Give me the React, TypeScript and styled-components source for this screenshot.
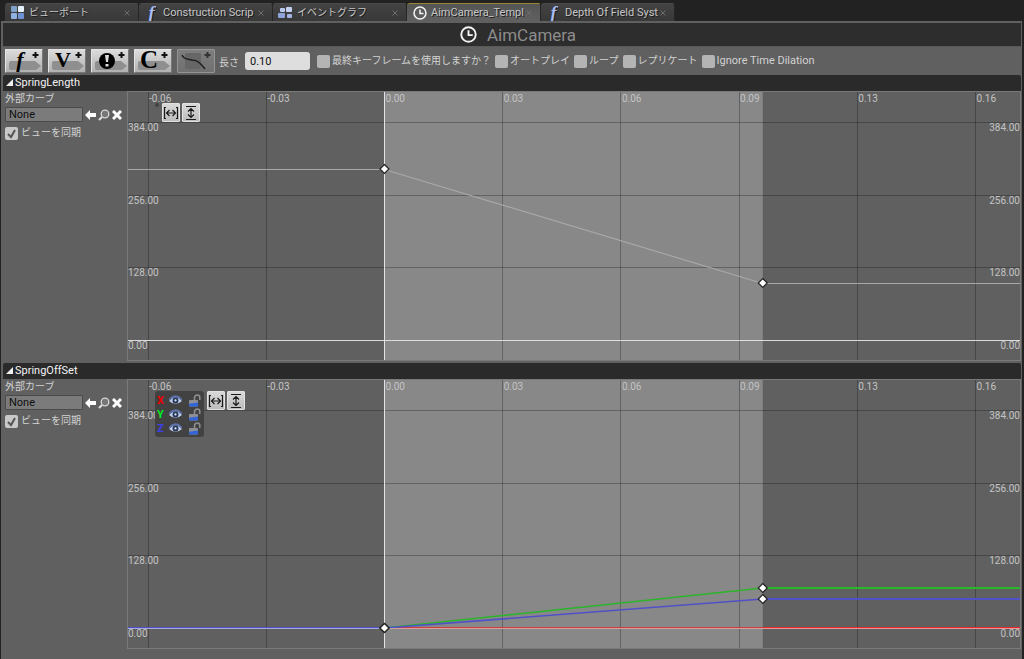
import React from "react";
import styled, { createGlobalStyle } from "styled-components";

const GlobalStyle = createGlobalStyle`
  * { box-sizing: border-box; }
  body {
    margin: 0;
    background: #222;
    color: #d2d2d2;
    font-family: Roboto, "Noto Sans CJK JP", sans-serif;
    font-size: 11px;
  }
  button, input { font: inherit; color: inherit; margin: 0; }
`;

/* ---------- data ---------- */

type Key = { t: number; v: number };
type Curve = { color: string; width: number; keys: Key[] };
type Channel = { name: string; color: string };

const VIEW_START = -0.0678;
const VIEW_SPAN = 0.2358;
const ZERO_Y = 248;
const STEP_Y = 72.7;
const TIMES = [-2, -1, 0, 1, 2, 3, 4, 5].map((n) => n / 32);
const TIME_LABELS = ["-0.06", "-0.03", "0.00", "0.03", "0.06", "0.09", "0.13", "0.16"];
const VALUES = [384, 256, 128, 0];
const LENGTH = 0.1;

const px = (t: number) => `${(((t - VIEW_START) / VIEW_SPAN) * 100).toFixed(2)}%`;
const py = (v: number) => Math.round(ZERO_Y - (v / 128) * STEP_Y);

const SPRING_LENGTH: Curve[] = [
  { color: "#a8a8a8", width: 1, keys: [{ t: 0, v: 301 }, { t: LENGTH, v: 100 }] },
];
const SPRING_OFFSET: Curve[] = [
  { color: "#e62828", width: 2, keys: [{ t: 0, v: 0 }, { t: LENGTH, v: 0 }] },
  { color: "#2bb52b", width: 2, keys: [{ t: 0, v: 0 }, { t: LENGTH, v: 70 }] },
  { color: "#5050c8", width: 2, keys: [{ t: 0, v: 0 }, { t: LENGTH, v: 51 }] },
];
const CHANNELS: Channel[] = [
  { name: "X", color: "#f00000" },
  { name: "Y", color: "#00f020" },
  { name: "Z", color: "#4040e8" },
];

/* ---------- layout ---------- */

const TabBar = styled.nav`
  display: flex;
  height: 21px;
  padding: 3px 5px 0;
`;

const Tab = styled.div<{ $active?: boolean }>`
  display: flex;
  flex: 0 1 134px;
  min-width: 0;
  align-items: center;
  padding: 0 6px 0 5px;
  overflow: hidden;
  border-right: 1px solid #262626;
  border-top: 1px solid ${(p) => (p.$active ? "#9a8530" : "#4a4a4a")};
  border-radius: 3px 3px 0 0;
  background: ${(p) => (p.$active ? "linear-gradient(#555, #606060)" : "linear-gradient(#434343, #383838)")};
`;

const TabLabel = styled.button<{ $cjk?: boolean }>`
  display: flex;
  flex: 1 0 auto;
  align-items: center;
  gap: 4px;
  padding: 0;
  border: 0;
  background: none;
  color: #c6c6c6;
  font-size: ${(p) => (p.$cjk ? 10 : 11)}px;
  line-height: 16px;
  text-align: left;
  text-shadow: 1px 1px 0 #1c1c1c;
  white-space: nowrap;
`;

const TabIcon = styled.span`
  display: flex;
  flex: none;
  width: 15px;
  height: 16px;
  align-items: center;
  justify-content: center;
`;

const TabFn = styled(TabIcon)`
  color: #a9bdf5;
  font: italic bold 18px/14px "Liberation Serif", serif;
`;

const CloseButton = styled.button`
  display: flex;
  flex: none;
  width: 10px;
  height: 12px;
  align-items: center;
  justify-content: center;
  padding: 0;
  border: 0;
  background: none;
`;

const Panel = styled.main`
  margin: 0 2px 0 1px;
  padding: 2px 1px 10px 2px;
  background: #606060;
`;

const TitleBar = styled.header`
  display: flex;
  align-items: center;
  justify-content: center;
  gap: 10px;
  height: 23px;
  padding-left: 12px;
  background: #2d2d2d;
`;

const Title = styled.h1`
  margin: 0;
  color: #8c8c8c;
  font-size: 17px;
  font-weight: 400;
  line-height: 22px;
`;

const Toolbar = styled.div`
  display: flex;
  align-items: center;
  height: 29px;
  padding-left: 2px;
  border-top: 1px solid #585858;
`;

const ToolButtons = styled.div`
  display: flex;
  gap: 5px;
`;

const ToolButton = styled.button`
  position: relative;
  width: 38px;
  height: 24px;
  padding: 0;
  border: 1px solid #e4e4e4;
  border-right-color: #777;
  border-bottom-color: #777;
  border-radius: 1px;
  background: linear-gradient(#dcdcdc, #b0b0b0);
  color: #000;
  &:disabled {
    border-color: #949494;
    background: linear-gradient(#7e7e7e, #707070);
    color: #222;
  }
  svg { display: block; }
`;

const Glyph = styled.span<{ $italic?: boolean; $large?: boolean }>`
  position: absolute;
  top: 0;
  left: 0;
  width: 28px;
  text-align: center;
  font: ${(p) => (p.$italic ? "italic " : "")}bold ${(p) => (p.$large ? 25 : 22)}px/20px "Liberation Serif", serif;
`;

const LengthLabel = styled.label`
  display: flex;
  align-items: center;
  gap: 6px;
  margin: 0 7px 0 4px;
  font-size: 10px;
`;

const LengthInput = styled.input`
  width: 65px;
  height: 18px;
  padding: 0 5px;
  border: 0;
  border-radius: 3px;
  background: #dedede;
  color: #111;
  font-size: 11px;
`;

const Options = styled.div`
  display: flex;
  gap: 4px;
`;

const CheckLabel = styled.label<{ $latin?: boolean; $gap?: number }>`
  display: flex;
  align-items: center;
  gap: ${(p) => p.$gap ?? 2}px;
  color: #d2d2d2;
  font-size: ${(p) => (p.$latin ? 11 : 10)}px;
  line-height: 14px;
  white-space: nowrap;
`;

const Check = styled.input`
  appearance: none;
  flex: none;
  width: 13px;
  height: 13px;
  border-radius: 2px;
  background: #b4b4b4;
  &:checked {
    background: #c8c8c8
      url("data:image/svg+xml,%3Csvg xmlns='http://www.w3.org/2000/svg' viewBox='0 0 13 13'%3E%3Cpath d='M3 7l3 3 4-7' fill='none' stroke='%23555' stroke-width='2'/%3E%3C/svg%3E");
  }
`;

const Section = styled.section`
  margin-bottom: 2px;
`;

const SectionHeader = styled.h2`
  display: flex;
  align-items: center;
  gap: 2px;
  height: 16px;
  margin: 0;
  padding: 0 0 2px 3px;
  border-radius: 2px 2px 0 0;
  background: #2a2a2a;
  color: #f2f2f2;
  font-size: 11px;
  font-weight: 400;
`;

const SectionBody = styled.div`
  display: grid;
  grid-template-columns: 124px minmax(0, 1fr);
`;

const Side = styled.div`
  display: flex;
  flex-direction: column;
  align-items: flex-start;
  gap: 4px;
  padding-left: 2px;
`;

const SideLabel = styled.label`
  height: 12px;
  font-size: 10px;
  line-height: 16px;
`;

const AssetRow = styled.div`
  display: flex;
  align-items: center;
`;

const AssetInput = styled.input`
  width: 78px;
  height: 15px;
  margin-right: 1px;
  padding: 0 3px;
  border: 1px solid #4a4a4a;
  border-radius: 1px;
  background: #7b7b7b;
  color: #111;
`;

const IconButton = styled.button`
  display: flex;
  width: 13px;
  height: 14px;
  align-items: center;
  justify-content: center;
  padding: 0;
  border: 0;
  background: none;
`;

const ChartFrame = styled.div`
  position: relative;
  height: 270px;
  border: 1px solid #7a7a7a;
`;

const ChartSvg = styled.svg`
  display: block;
  width: 100%;
  height: 268px;
  text {
    fill: #c4c4c4;
    font-size: 10px;
  }
`;

const Overlay = styled.div`
  position: absolute;
  top: 11px;
  left: 27px;
  display: flex;
  align-items: flex-start;
  gap: 2px;
`;

const ChannelBox = styled.div`
  padding: 2px;
  margin-right: 1px;
  border-radius: 3px;
  background: #424242;
`;

const ChannelRow = styled.div`
  display: flex;
  height: 14px;
  align-items: center;
  gap: 4px;
`;

const ChannelName = styled.span<{ $color: string }>`
  width: 7px;
  color: ${(p) => p.$color};
  font-size: 11px;
  font-weight: 700;
  text-align: center;
`;

const ChannelButton = styled(IconButton)`
  width: 15px;
`;

const ZoomButton = styled.button`
  display: flex;
  width: 18px;
  height: 19px;
  align-items: center;
  justify-content: center;
  padding: 0;
  border: 1px solid #e2e2e2;
  border-radius: 1px;
  background: linear-gradient(#d8d8d8, #bcbcbc);
`;

/* ---------- icons ---------- */

const ViewportIcon = () => (
  <svg width="13" height="13" viewBox="0 0 13 13">
    <rect x="0" y="0" width="6" height="6" rx="1" fill="#7fa3c8" />
    <rect x="7" y="0" width="6" height="6" rx="1" fill="#e6f0fa" />
    <rect x="0" y="7" width="6" height="6" rx="1" fill="#8fb0e0" />
    <rect x="7" y="7" width="6" height="6" rx="1" fill="#6f93d4" />
  </svg>
);

const GraphIcon = () => (
  <svg width="15" height="14" viewBox="0 0 15 14">
    <rect x="2" y="2" width="5" height="4" rx="1" fill="#b9c8ee" />
    <rect x="8" y="1" width="6" height="5" rx="1" fill="#c3d0f2" />
    <rect x="0" y="7" width="7" height="5" rx="1" fill="#8ea3dc" />
    <rect x="9" y="8" width="5" height="4" rx="1" fill="#a4b5e6" />
  </svg>
);

const ClockIcon = ({ size }: { size: number }) => (
  <svg width={size} height={size} viewBox="0 0 16 16" fill="none" stroke="#f2f2f2">
    <circle cx="8" cy="8" r="6.8" strokeWidth="1.8" />
    <path d="M8 4v4.6h4" strokeWidth="1.8" />
  </svg>
);

const SmallCross = () => (
  <svg width="6" height="6" viewBox="0 0 6 6">
    <path d="M.5.5l5 5M5.500.5l-5 5" stroke="#6c6c6c" />
  </svg>
);

const ToolBackdrop = ({ children }: { children?: React.ReactNode }) => (
  <svg width="36" height="22" viewBox="0 0 36 22">
    <path d="M5 11h24l6 5-5 4H5q-2 0-2-2v-5q0-2 2-2z" fill="#8f8f8f" />
    <path d="M29.500 2v6M26.500 5h6" stroke="#111" strokeWidth="2" />
    {children}
  </svg>
);

const CurveToolIcon = () => (
  <svg width="36" height="22" viewBox="0 0 36 22">
    <rect x="7" y="3" width="16" height="16" rx="2" fill="#666" />
    <path d="M29.500 2v6M26.500 5h6" stroke="#333" strokeWidth="2" />
    <path d="M4 5c2 5 6 4 10 5 6 0 9 4 13 9" fill="none" stroke="#1f1f1f" strokeWidth="1.500" />
  </svg>
);

const Triangle = () => (
  <svg width="7" height="7" viewBox="0 0 7 7">
    <path d="M7 0v7H0z" fill="#f0f0f0" />
  </svg>
);

const ArrowIcon = () => (
  <svg width="11" height="10" viewBox="0 0 11 10">
    <path d="M0 5l5-5v3h6v4H5v3z" fill="#fff" />
  </svg>
);

const SearchIcon = () => (
  <svg width="12" height="12" viewBox="0 0 12 12">
    <circle cx="7" cy="5" r="3.800" fill="#777" stroke="#d8d8d8" strokeWidth="1.300" />
    <path d="M4 8l-3 3" stroke="#e0e0e0" strokeWidth="2" />
  </svg>
);

const ClearIcon = () => (
  <svg width="10" height="10" viewBox="0 0 10 10">
    <path d="M1 1l8 8M9 1L1 9" stroke="#fff" strokeWidth="3" />
  </svg>
);

const EyeIcon = () => (
  <svg width="13" height="10" viewBox="0 0 14 10">
    <path d="M0 6Q7-2 14 6Q7 12 0 6z" fill="#c3d0ee" />
    <path d="M0 5Q7-3 14 5" fill="none" stroke="#5f74ad" strokeWidth="2" />
    <circle cx="7" cy="5.500" r="3.200" fill="#263657" />
    <circle cx="7" cy="5.500" r="1.200" fill="#dfe8ff" />
  </svg>
);

const LockIcon = () => (
  <svg width="13" height="13" viewBox="0 0 13 13">
    <path d="M6.500 6V3.500Q7 1 9.300 1Q11.800 1 11.800 3.500V6" fill="none" stroke="#8f8f8f" strokeWidth="1.500" />
    <rect x="1" y="6" width="9" height="6.500" rx="1" fill="#8d8f94" />
    <path d="M1 9.800l9-1.300V11.500q0 1-1 1H2q-1 0-1-1z" fill="#3465d8" />
  </svg>
);

const FitHorizontalIcon = () => (
  <svg width="16" height="14" viewBox="0 0 16 14" fill="none" stroke="#1a1a1a" strokeWidth="1.200">
    <path d="M3 1.500H1.500v11H3M13 1.500h1.500v11H13M3.500 7h9M6.500 4L3.500 7l3 3M9.500 4L12.500 7l-3 3" />
  </svg>
);

const FitVerticalIcon = () => (
  <svg width="14" height="16" viewBox="0 0 14 16" fill="none" stroke="#1a1a1a" strokeWidth="1.200">
    <path d="M2 1.500h10M2 14.500h10M7 3.500v9M4 6.500L7 3.500l3 3M4 9.500l3 3 3-3" />
  </svg>
);

/* ---------- chart ---------- */

const KeyMarker = ({ k }: { k: Key }) => (
  <svg x={px(k.t)} y={py(k.v)} overflow="visible">
    <path d="M0-4.500L4.500 0 0 4.500-4.500 0z" fill="#fff" stroke="#222" strokeWidth="1.200" />
  </svg>
);

const CurveLines = ({ curve }: { curve: Curve }) => {
  const [a, b] = curve.keys;
  const thick = curve.width === 2;
  const shift = thick ? 0 : 0.5;
  return (
    <g stroke={curve.color} strokeWidth={curve.width}>
      <line x1="0" x2={px(a.t)} y1={py(a.v) + shift} y2={py(a.v) + shift} />
      <line x1={px(a.t)} x2={px(b.t)} y1={py(a.v) + shift} y2={py(b.v) + shift} strokeWidth={thick ? 1.5 : 1.2} />
      <line x1={px(b.t)} x2="100%" y1={py(b.v) + shift} y2={py(b.v) + shift} />
    </g>
  );
};

const Chart = ({ curves, label, zeroOpacity }: { curves: Curve[]; label: string; zeroOpacity: number }) => (
  <ChartSvg role="img" aria-label={label}>
    <rect x={px(0)} y="0" width={`${((LENGTH / VIEW_SPAN) * 100).toFixed(2)}%`} height="100%" fill="#888" />
    <g stroke="#000" strokeOpacity="0.27" shapeRendering="crispEdges">
      {TIMES.map((t) => (
        <line key={t} x1={px(t)} x2={px(t)} y1="0" y2="100%" />
      ))}
      {VALUES.map((v) => (
        <line key={v} x1="0" x2="100%" y1={py(v) + 0.5} y2={py(v) + 0.5} />
      ))}
    </g>
    <line x1={px(0)} x2={px(0)} y1="0" y2="100%" stroke="#e4e4e4" shapeRendering="crispEdges" />
    {TIMES.map((t, i) => (
      <text key={t} x={px(t)} dx="1" y="10">{TIME_LABELS[i]}</text>
    ))}
    {VALUES.map((v) => (
      <React.Fragment key={v}>
        <text x="0" y={py(v) + 9}>{v.toFixed(2)}</text>
        <text x="100%" y={py(v) + 9} textAnchor="end">{v.toFixed(2)}</text>
      </React.Fragment>
    ))}
    {curves.map((c) => <CurveLines key={c.color} curve={c} />)}
    <line x1="0" x2="100%" y1={ZERO_Y + 0.5} y2={ZERO_Y + 0.5} stroke="#e4e4e4" strokeOpacity={zeroOpacity} />
    {curves.map((c) => c.keys.map((k) => (k.v === 0 && k.t > 0 ? null : <KeyMarker key={`${c.color}${k.t}`} k={k} />)))}
  </ChartSvg>
);

type SectionProps = { id: string; name: string; curves: Curve[]; zeroOpacity: number; channels?: Channel[] };

const CurveSection = ({ id, name, curves, zeroOpacity, channels = [] }: SectionProps) => (
  <Section>
    <SectionHeader><Triangle />{name}</SectionHeader>
    <SectionBody>
      <Side>
        <SideLabel htmlFor={`${id}-asset`}>外部カーブ</SideLabel>
        <AssetRow>
          <AssetInput id={`${id}-asset`} defaultValue="None" />
          <IconButton aria-label="Use selected"><ArrowIcon /></IconButton>
          <IconButton aria-label="Browse"><SearchIcon /></IconButton>
          <IconButton aria-label="Clear"><ClearIcon /></IconButton>
        </AssetRow>
        <CheckLabel $gap={3}><Check type="checkbox" defaultChecked />ビューを同期</CheckLabel>
      </Side>
      <ChartFrame>
        <Chart curves={curves} label={name} zeroOpacity={zeroOpacity} />
        <Overlay>
          <ChannelBox>
            {channels.map((c) => (
              <ChannelRow key={c.name}>
                <ChannelName $color={c.color}>{c.name}</ChannelName>
                <ChannelButton aria-label={`Show ${c.name}`}><EyeIcon /></ChannelButton>
                <ChannelButton aria-label={`Lock ${c.name}`}><LockIcon /></ChannelButton>
              </ChannelRow>
            ))}
          </ChannelBox>
          <ZoomButton aria-label="Fit horizontal"><FitHorizontalIcon /></ZoomButton>
          <ZoomButton aria-label="Fit vertical"><FitVerticalIcon /></ZoomButton>
        </Overlay>
      </ChartFrame>
    </SectionBody>
  </Section>
);

const TABS = [
  { text: "ビューポート", icon: <TabIcon><ViewportIcon /></TabIcon>, cjk: true },
  { text: "Construction Scrip", icon: <TabFn aria-hidden="true">f</TabFn> },
  { text: "イベントグラフ", icon: <TabIcon><GraphIcon /></TabIcon>, cjk: true },
  { text: "AimCamera_Templ", icon: <TabIcon><ClockIcon size={14} /></TabIcon>, active: true },
  { text: "Depth Of Field Syst", icon: <TabFn aria-hidden="true">f</TabFn> },
];

export default function App() {
  return (
    <>
      <GlobalStyle />
      <TabBar>
        {TABS.map((t) => (
          <Tab key={t.text} $active={t.active}>
            <TabLabel $cjk={t.cjk}>{t.icon}{t.text}</TabLabel>
            <CloseButton aria-label="Close tab"><SmallCross /></CloseButton>
          </Tab>
        ))}
      </TabBar>
      <Panel>
        <TitleBar><ClockIcon size={17} /><Title>AimCamera</Title></TitleBar>
        <Toolbar>
          <ToolButtons>
            <ToolButton aria-label="Add float track"><ToolBackdrop /><Glyph $italic aria-hidden="true">f</Glyph></ToolButton>
            <ToolButton aria-label="Add vector track"><ToolBackdrop /><Glyph aria-hidden="true">V</Glyph></ToolButton>
            <ToolButton aria-label="Add event track">
              <ToolBackdrop>
                <circle cx="15" cy="11" r="8" fill="#000" />
                <path d="M13 5h4l-1 7h-2zM13.500 14h3v2.500h-3z" fill="#ddd" />
              </ToolBackdrop>
            </ToolButton>
            <ToolButton aria-label="Add color track"><ToolBackdrop /><Glyph $large aria-hidden="true">C</Glyph></ToolButton>
            <ToolButton aria-label="Add external curve" disabled><CurveToolIcon /></ToolButton>
          </ToolButtons>
          <LengthLabel>長さ<LengthInput defaultValue="0.10" /></LengthLabel>
          <Options>
            <CheckLabel><Check type="checkbox" />最終キーフレームを使用しますか？</CheckLabel>
            <CheckLabel><Check type="checkbox" />オートプレイ</CheckLabel>
            <CheckLabel><Check type="checkbox" />ループ</CheckLabel>
            <CheckLabel><Check type="checkbox" />レプリケート</CheckLabel>
            <CheckLabel $latin><Check type="checkbox" />Ignore Time Dilation</CheckLabel>
          </Options>
        </Toolbar>
        <CurveSection id="spring-length" name="SpringLength" curves={SPRING_LENGTH} zeroOpacity={0.95} />
        <CurveSection id="spring-offset" name="SpringOffSet" curves={SPRING_OFFSET} zeroOpacity={0.6} channels={CHANNELS} />
      </Panel>
    </>
  );
}
